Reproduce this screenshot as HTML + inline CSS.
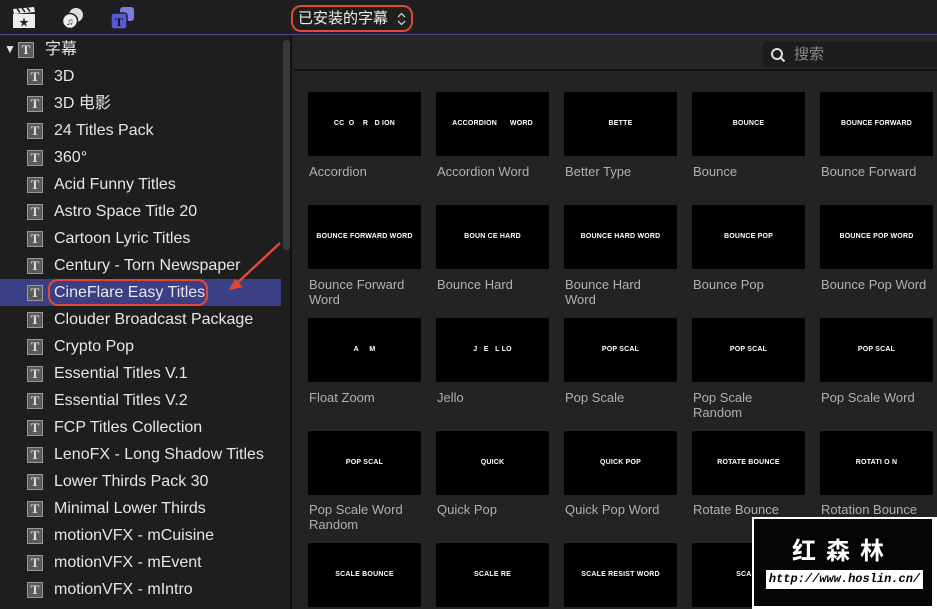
<!DOCTYPE html>
<html><head><meta charset="utf-8"><style>
*{margin:0;padding:0;box-sizing:border-box}
body{width:937px;height:609px;overflow:hidden;background:#232323;font-family:"Liberation Sans","Noto Sans CJK SC",sans-serif;position:relative;color:#ddd}
.top{position:absolute;left:0;top:0;width:937px;height:35px;background:#1f1f1f;border-bottom:1px solid #4a4a9a}
.side{position:absolute;left:0;top:36px;width:292px;height:573px;background:#1e1e1e;border-right:2px solid #111}
.scroll{position:absolute;left:283px;top:4px;width:7px;height:210px;background:#3a3a3a;border-radius:4px}
.row{position:absolute;left:0;width:281px;height:27px;font-size:16px;line-height:27px;color:#e6e6e6}
.row .t{position:absolute;left:27px;top:6px;width:16px;height:16px;border:1px solid #999;background:#5a5a5a;color:#ddd;font-family:"Liberation Serif",serif;font-size:13px;line-height:14px;text-align:center;font-weight:bold}
.row span.n{position:absolute;left:54px}
.sel{background:#3b3f86}
.search{position:absolute;left:294px;top:36px;width:643px;height:35px;background:#262626;border-bottom:2px solid #111}
.sbox{position:absolute;left:762px;top:42px;width:180px;height:25px;background:#1d1d1d;border-radius:5px;font-size:15px;line-height:25px;color:#888;padding-left:32px}
.th{position:absolute;width:113px;height:64px;background:#000;border-radius:2px;color:#fff;font-size:7px;font-weight:bold;text-align:center;line-height:64px;letter-spacing:0.2px}
.lb{position:absolute;width:125px;font-size:13px;color:#b0b0b0;line-height:15px}
</style></head><body>
<div class="top">
<svg style="position:absolute;left:12px;top:7px" width="24" height="22" viewBox="0 0 24 22"><rect x="1" y="7" width="22" height="14" fill="#eee"/><path d="M1 2l21-2 1 5-21 2z" fill="#eee"/><path d="M5 1.5l3 4M10 1l3 4M15 .5l3 4" stroke="#222" stroke-width="1.5"/><text x="12" y="19" font-size="10" text-anchor="middle" fill="#222">★</text></svg>
<svg style="position:absolute;left:61px;top:7px" width="24" height="22" viewBox="0 0 24 22"><circle cx="15" cy="8" r="7" fill="#ddd"/><circle cx="9" cy="14" r="7.5" fill="#eee" stroke="#222" stroke-width="1.5"/><text x="9" y="18" font-size="10" text-anchor="middle" fill="#222">♫</text></svg>
<svg style="position:absolute;left:110px;top:6px" width="26" height="24" viewBox="0 0 26 24"><rect x="10" y="1" width="14" height="14" rx="3" fill="#7c7ce0"/><rect x="1" y="7" width="16" height="16" rx="3" fill="#5a5ad8" stroke="#1f1f1f" stroke-width="1.5"/><text x="9" y="20" font-size="12" font-family="Liberation Serif" font-weight="bold" text-anchor="middle" fill="#111">T</text></svg>
<div style="position:absolute;left:291px;top:5px;width:122px;height:27px;border:2px solid #e04a35;border-radius:10px;font-size:15px;line-height:23px;color:#eee;padding-left:5px">已安装的字幕<svg style="position:absolute;left:104px;top:5px" width="9" height="14"><path d="M1 5l3.5-3.5L8 5M1 9l3.5 3.5L8 9" stroke="#ccc" stroke-width="1.3" fill="none"/></svg></div>
</div>
<div class="side">
<div class="row" style="top:0"><span style="position:absolute;left:4px;font-size:12px">▼</span><span class="t" style="left:18px">T</span><span class="n" style="left:45px">字幕</span></div>
<div class="row" style="top:27px"><span class="t">T</span><span class="n">3D</span></div>
<div class="row" style="top:54px"><span class="t">T</span><span class="n">3D 电影</span></div>
<div class="row" style="top:81px"><span class="t">T</span><span class="n">24 Titles Pack</span></div>
<div class="row" style="top:108px"><span class="t">T</span><span class="n">360°</span></div>
<div class="row" style="top:135px"><span class="t">T</span><span class="n">Acid Funny Titles</span></div>
<div class="row" style="top:162px"><span class="t">T</span><span class="n">Astro Space Title 20</span></div>
<div class="row" style="top:189px"><span class="t">T</span><span class="n">Cartoon Lyric Titles</span></div>
<div class="row" style="top:216px"><span class="t">T</span><span class="n">Century - Torn Newspaper</span></div>
<div class="row sel" style="top:243px"><span class="t">T</span><span class="n">CineFlare Easy Titles</span><div style="position:absolute;left:48px;top:0;width:160px;height:27px;border:2px solid #e04a35;border-radius:10px"></div></div>
<div class="row" style="top:270px"><span class="t">T</span><span class="n">Clouder Broadcast Package</span></div>
<div class="row" style="top:297px"><span class="t">T</span><span class="n">Crypto Pop</span></div>
<div class="row" style="top:324px"><span class="t">T</span><span class="n">Essential Titles V.1</span></div>
<div class="row" style="top:351px"><span class="t">T</span><span class="n">Essential Titles V.2</span></div>
<div class="row" style="top:378px"><span class="t">T</span><span class="n">FCP Titles Collection</span></div>
<div class="row" style="top:405px"><span class="t">T</span><span class="n">LenoFX - Long Shadow Titles</span></div>
<div class="row" style="top:432px"><span class="t">T</span><span class="n">Lower Thirds Pack 30</span></div>
<div class="row" style="top:459px"><span class="t">T</span><span class="n">Minimal Lower Thirds</span></div>
<div class="row" style="top:486px"><span class="t">T</span><span class="n">motionVFX - mCuisine</span></div>
<div class="row" style="top:513px"><span class="t">T</span><span class="n">motionVFX - mEvent</span></div>
<div class="row" style="top:540px"><span class="t">T</span><span class="n">motionVFX - mIntro</span></div>
<div class="scroll"></div>
</div>
<svg style="position:absolute;left:225px;top:240px" width="60" height="55"><path d="M55 3L10 45" stroke="#e04a35" stroke-width="2.5"/><path d="M4 50l14-3-8-8z" fill="#e04a35"/></svg>
<div class="search"></div>
<div class="sbox"><svg style="position:absolute;left:8px;top:5px" width="16" height="16"><circle cx="7" cy="7" r="5" stroke="#ddd" stroke-width="2" fill="none"/><path d="M10.5 10.5l4 4" stroke="#ddd" stroke-width="2"/></svg>搜索</div>

<div class="th" style="left:308px;top:92px">CC &nbsp;O &nbsp;&nbsp; R &nbsp; D ION</div><div class="lb" style="left:309px;top:164px">Accordion</div>
<div class="th" style="left:436px;top:92px">ACCORDION &nbsp;&nbsp;&nbsp;&nbsp; WORD</div><div class="lb" style="left:437px;top:164px">Accordion Word</div>
<div class="th" style="left:564px;top:92px">BETTE</div><div class="lb" style="left:565px;top:164px">Better Type</div>
<div class="th" style="left:692px;top:92px">BOUNCE</div><div class="lb" style="left:693px;top:164px">Bounce</div>
<div class="th" style="left:820px;top:92px">BOUNCE FORWARD</div><div class="lb" style="left:821px;top:164px">Bounce Forward</div>

<div class="th" style="left:308px;top:205px">BOUNCE FORWARD WORD</div><div class="lb" style="left:309px;top:277px">Bounce Forward<br>Word</div>
<div class="th" style="left:436px;top:205px">BOUN CE HARD</div><div class="lb" style="left:437px;top:277px">Bounce Hard</div>
<div class="th" style="left:564px;top:205px">BOUNCE HARD WORD</div><div class="lb" style="left:565px;top:277px">Bounce Hard<br>Word</div>
<div class="th" style="left:692px;top:205px">BOUNCE POP</div><div class="lb" style="left:693px;top:277px">Bounce Pop</div>
<div class="th" style="left:820px;top:205px">BOUNCE POP WORD</div><div class="lb" style="left:821px;top:277px">Bounce Pop Word</div>

<div class="th" style="left:308px;top:318px">A &nbsp;&nbsp;&nbsp; M</div><div class="lb" style="left:309px;top:390px">Float Zoom</div>
<div class="th" style="left:436px;top:318px">J &nbsp; E &nbsp; L LO</div><div class="lb" style="left:437px;top:390px">Jello</div>
<div class="th" style="left:564px;top:318px">POP SCAL</div><div class="lb" style="left:565px;top:390px">Pop Scale</div>
<div class="th" style="left:692px;top:318px">POP SCAL</div><div class="lb" style="left:693px;top:390px">Pop Scale<br>Random</div>
<div class="th" style="left:820px;top:318px">POP SCAL</div><div class="lb" style="left:821px;top:390px">Pop Scale Word</div>

<div class="th" style="left:308px;top:431px">POP SCAL</div><div class="lb" style="left:309px;top:502px">Pop Scale Word<br>Random</div>
<div class="th" style="left:436px;top:431px">QUICK</div><div class="lb" style="left:437px;top:502px">Quick Pop</div>
<div class="th" style="left:564px;top:431px">QUICK POP</div><div class="lb" style="left:565px;top:502px">Quick Pop Word</div>
<div class="th" style="left:692px;top:431px">ROTATE BOUNCE</div><div class="lb" style="left:693px;top:502px">Rotate Bounce</div>
<div class="th" style="left:820px;top:431px">ROTATI O N</div><div class="lb" style="left:821px;top:502px">Rotation Bounce</div>

<div class="th" style="left:308px;top:543px">SCALE BOUNCE</div>
<div class="th" style="left:436px;top:543px">SCALE RE</div>
<div class="th" style="left:564px;top:543px">SCALE RESIST WORD</div>
<div class="th" style="left:692px;top:543px">SCALE</div>

<div style="position:absolute;left:752px;top:517px;width:185px;height:92px;background:#fff"></div>
<div style="position:absolute;left:754px;top:519px;width:178px;height:87px;background:#050505">
<div style="position:absolute;left:0;top:12px;width:178px;text-align:center;font-size:24px;font-weight:bold;color:#fff;letter-spacing:10px;font-family:'Noto Sans CJK SC',sans-serif">红森林</div>
<div style="position:absolute;left:12px;top:51px;width:157px;height:19px;background:#fff;color:#000;font-family:'Liberation Mono',monospace;font-style:italic;font-weight:bold;font-size:12px;line-height:19px;text-align:center;white-space:nowrap;overflow:hidden">http://www.hoslin.cn/</div>
</div>
</body></html>
